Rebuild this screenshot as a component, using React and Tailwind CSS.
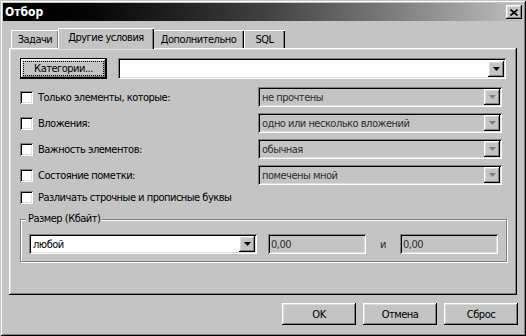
import React from "react";

const raised =
  "shadow-[inset_-1px_-1px_0_#000,inset_1px_1px_0_#fff,inset_-2px_-2px_0_#808080,inset_2px_2px_0_#dcdcdc]";
const sunken =
  "shadow-[inset_1px_1px_0_#808080,inset_-1px_-1px_0_#fff,inset_2px_2px_0_#000,inset_-2px_-2px_0_#dcdcdc]";

function Arrow({ disabled }) {
  return (
    <div className={`w-[16px] h-[16px] bg-[#c4c4c4] flex items-center justify-center ${raised}`}>
      <svg width="7" height="4" viewBox="0 0 7 4">
        <polygon points="0,0 7,0 3.5,4" fill={disabled ? "#808080" : "#000"} />
      </svg>
    </div>
  );
}

function Combo({ text, disabled, className = "" }) {
  return (
    <div
      className={`h-[20px] flex items-center justify-between pl-[4px] pr-[2px] ${sunken} ${
        disabled ? "bg-[#c4c4c4] text-[#2e2e2e]" : "bg-white text-black"
      } ${className}`}
    >
      <span className="leading-none whitespace-nowrap">{text}</span>
      <Arrow disabled={disabled} />
    </div>
  );
}

function Check({ label }) {
  return (
    <div className="flex items-center gap-[5px]">
      <div className={`w-[13px] h-[13px] bg-white ${sunken}`} />
      <span className="leading-none whitespace-nowrap">{label}</span>
    </div>
  );
}

function Row({ label, value }) {
  return (
    <div className="h-[20px] flex items-center justify-between">
      <Check label={label} />
      <Combo text={value} disabled className="w-[244px] mr-[4px]" />
    </div>
  );
}

function Tab({ label, selected, className = "" }) {
  return (
    <div
      className={`flex items-center justify-center bg-[#c4c4c4] shadow-[inset_1px_1px_0_#fff,inset_-1px_0_0_#000,inset_-2px_0_0_#808080] ${
        selected ? "h-[21px] -mb-[1px] z-10 relative pb-[2px]" : "h-[18px] pt-[1px]"
      } ${className}`}
    >
      <span className="leading-none whitespace-nowrap">{label}</span>
    </div>
  );
}

function Btn({ children }) {
  return (
    <div className={`w-[74px] h-[22px] bg-[#c4c4c4] flex items-center justify-center ${raised}`}>
      <span className="leading-none">{children}</span>
    </div>
  );
}

export default function App() {
  return (
    <div
      className={`w-[526px] h-[336px] bg-[#c4c4c4] flex flex-col font-['DejaVu_Sans_Condensed','DejaVu_Sans',sans-serif] [font-stretch:condensed] text-[11px] tracking-[-0.5px] text-black shadow-[inset_1px_1px_0_#c4c4c4,inset_-1px_-1px_0_#000,inset_2px_2px_0_#fff,inset_-2px_-2px_0_#808080]`}
    >
      {/* Title bar */}
      <div className="mt-[3px] mx-[3px] h-[18px] bg-gradient-to-r from-[#000] via-[#404040] to-[#c0c0c0] flex items-center justify-between pl-[2px] pr-[1px]">
        <span className="text-white font-bold text-[12px] tracking-normal leading-none">Отбор</span>
        <div className={`w-[16px] h-[14px] bg-[#c4c4c4] flex items-center justify-center ${raised}`}>
          <svg width="8" height="7" viewBox="0 0 8 7">
            <path d="M0.5 0.5 L7.5 6.5 M7.5 0.5 L0.5 6.5" stroke="#000" strokeWidth="1.6" />
          </svg>
        </div>
      </div>

      {/* Tabs */}
      <div className="ml-[11px] mt-[8px] flex items-end h-[19px]">
        <Tab label="Задачи" className="w-[48px]" />
        <Tab label="Другие условия" selected className="w-[96px] -ml-[1px] -mr-[1px]" />
        <Tab label="Дополнительно" className="w-[91px]" />
        <Tab label="SQL" className="w-[41px]" />
      </div>

      {/* Panel */}
      <div
        className={`ml-[9px] w-[508px] h-[247px] bg-[#c4c4c4] px-[11px] pt-[10px] flex flex-col ${raised}`}
      >
        <div className="flex h-[21px] gap-[11px]">
          <div className="w-[87px] h-[21px] border border-black bg-[#c4c4c4]">
            <div className={`w-full h-full p-[2px] ${raised}`}>
              <div className="w-full h-full border border-dotted border-black flex items-center justify-center">
                <span className="leading-none whitespace-nowrap">Категории...</span>
              </div>
            </div>
          </div>
          <Combo text="" className="w-[388px] h-[21px]" />
        </div>

        <div className="mt-[8px] flex flex-col gap-[6px]">
          <Row label="Только элементы, которые:" value="не прочтены" />
          <Row label="Вложения:" value="одно или несколько вложений" />
          <Row label="Важность элементов:" value="обычная" />
          <Row label="Состояние пометки:" value="помечены мной" />
        </div>
        <div className="h-[20px] mt-[2px] flex items-center">
          <Check label="Различать строчные и прописные буквы" />
        </div>

        {/* Group box */}
        <div className="mt-[12px] w-[487px] h-[43px] relative border border-[#808080] shadow-[inset_1px_1px_0_#fff,1px_1px_0_#fff] px-[8px] pt-[14px]">
          <span className="absolute left-[5px] -top-[7px] bg-[#c4c4c4] px-[2px] leading-none">
            Размер (Кбайт)
          </span>
          <div className="flex items-center">
            <Combo text="любой" className="w-[228px] bg-white" />
            <div className={`ml-[11px] w-[98px] h-[20px] flex items-center pl-[3px] text-[#2e2e2e] ${sunken}`}>
              <span className="leading-none">0,00</span>
            </div>
            <span className="ml-[14px] w-[20px] leading-none text-[#2e2e2e]">и</span>
            <div className={`w-[98px] h-[20px] flex items-center pl-[3px] text-[#2e2e2e] ${sunken}`}>
              <span className="leading-none">0,00</span>
            </div>
          </div>
        </div>
      </div>

      {/* Buttons */}
      <div className="mt-[8px] flex justify-end gap-[7px] pr-[8px]">
        <Btn>OK</Btn>
        <Btn>Отмена</Btn>
        <Btn>Сброс</Btn>
      </div>
    </div>
  );
}
